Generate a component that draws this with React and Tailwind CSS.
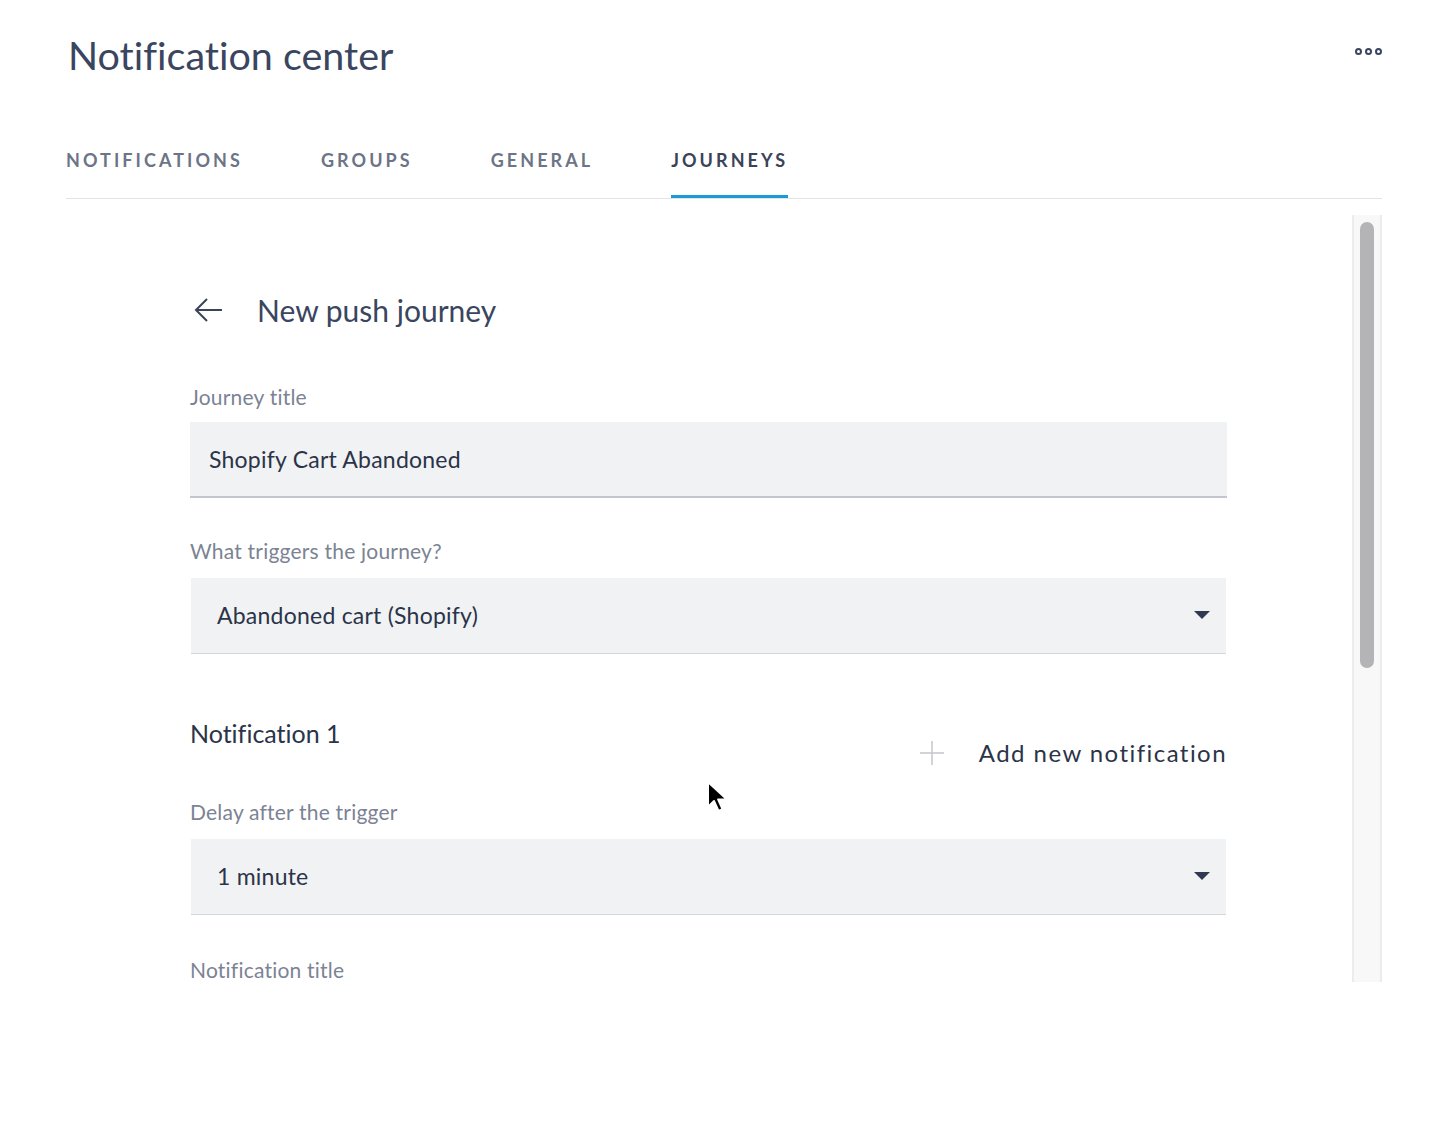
import React from 'react';

const TABS = ['Notifications', 'Groups', 'General', 'Journeys'];

function Caret() {
  return (
    <svg width="16" height="9" viewBox="0 0 16 9" className="shrink-0">
      <polygon points="0,0 16,0 8,8" fill="#2f3a52" />
    </svg>
  );
}

function Label({ children, className = '' }) {
  return (
    <div className={`text-[21px] leading-[24px] tracking-[0.01em] text-[#7b8394] ${className}`}>
      {children}
    </div>
  );
}

function Select({ value }) {
  return (
    <div className="mx-px flex h-[76px] items-center justify-between border-b border-[#d3d6db] bg-[#f1f2f4] pl-[26px] pr-[16px]">
      <span className="text-[23px] tracking-[0.01em] text-[#2b3448]">{value}</span>
      <Caret />
    </div>
  );
}

export default function App() {
  return (
    <div
      className="relative h-[1142px] w-full bg-white pl-[66px] pr-[50px] [font-variant-ligatures:none]"
      style={{ fontFamily: 'Lato, "Open Sans", sans-serif' }}
    >
      {/* header */}
      <div className="flex items-start justify-between pt-[31px]">
        <h1 className="pl-[2px] text-[39.5px] font-normal leading-[48px] text-[#3a4560]">
          Notification center
        </h1>
        <div className="mt-[17px] flex gap-[3px]">
          <span className="h-[7px] w-[7px] rounded-full border-2 border-[#3a4560]" />
          <span className="h-[7px] w-[7px] rounded-full border-2 border-[#3a4560]" />
          <span className="h-[7px] w-[7px] rounded-full border-2 border-[#3a4560]" />
        </div>
      </div>

      {/* tabs */}
      <div className="mt-[70px] flex gap-[78px] border-b border-[#e2e3e5]">
        {TABS.map((t) => (
          <div
            key={t}
            className={`border-b-[3px] pb-[24px] text-[18px] font-bold uppercase leading-[22px] tracking-[0.17em] ${
              t === 'Journeys'
                ? 'border-[#1c9ad6] text-[#3a4358]'
                : 'border-transparent text-[#6c7486]'
            }`}
          >
            {t}
          </div>
        ))}
      </div>

      {/* scroll panel */}
      <div className="mt-[16px] flex h-[767px] overflow-hidden">
        <div className="flex-1 overflow-hidden pl-[124px] pt-[75px]">
          <div className="w-[1037px]">
            <div className="flex h-[40px] items-center">
              <svg width="30" height="24" viewBox="0 0 30 24" className="ml-[4px]">
                <path d="M28 12H2M13 1L2 12l11 11" fill="none" stroke="#3a4358" strokeWidth="2" />
              </svg>
              <span className="ml-[33px] text-[30px] text-[#3a4560]">New push journey</span>
            </div>

            <Label className="mt-[55px]">Journey title</Label>
            <div className="mt-[13px] flex h-[76px] items-center border-b-2 border-[#c3c6cc] bg-[#f1f2f4] pl-[19px]">
              <span className="text-[23px] tracking-[0.01em] text-[#2b3448]">
                Shopify Cart Abandoned
              </span>
            </div>

            <Label className="mt-[41px]">What triggers the journey?</Label>
            <div className="mt-[15px]">
              <Select value="Abandoned cart (Shopify)" />
            </div>

            <div className="mt-[65px] flex items-start justify-between">
              <div className="text-[25px] leading-[28px] text-[#2b3448]">Notification 1</div>
              <div className="mt-[20px] flex items-center">
                <svg width="26" height="26" viewBox="0 0 26 26">
                  <path d="M13 1v24M1 13h24" stroke="#c3c6cc" strokeWidth="1.5" />
                </svg>
                <span className="ml-[34px] text-[24px] leading-[28px] tracking-[0.06em] text-[#2b3448]">
                  Add new notification
                </span>
              </div>
            </div>

            <Label className="mt-[33px]">Delay after the trigger</Label>
            <div className="mt-[15px]">
              <Select value="1 minute" />
            </div>

            <Label className="mt-[43px]">Notification title</Label>
          </div>
        </div>

        {/* scrollbar */}
        <div className="w-[30px] border-l-2 border-r-2 border-[#ececec] bg-[#f8f8f8] px-[6px] pt-[7px]">
          <div className="h-[446px] rounded-full bg-[#b4b4b6]" />
        </div>
      </div>

      {/* mouse cursor */}
      <svg
        width="24"
        height="34"
        viewBox="0 0 24 34"
        className="absolute left-[706px] top-[780px]"
      >
        <path
          d="M2 2v25l6-6 4.5 10 4-1.8-4.4-9.8H21z"
          fill="#000"
          stroke="#fff"
          strokeWidth="2"
          strokeLinejoin="round"
        />
      </svg>
    </div>
  );
}
